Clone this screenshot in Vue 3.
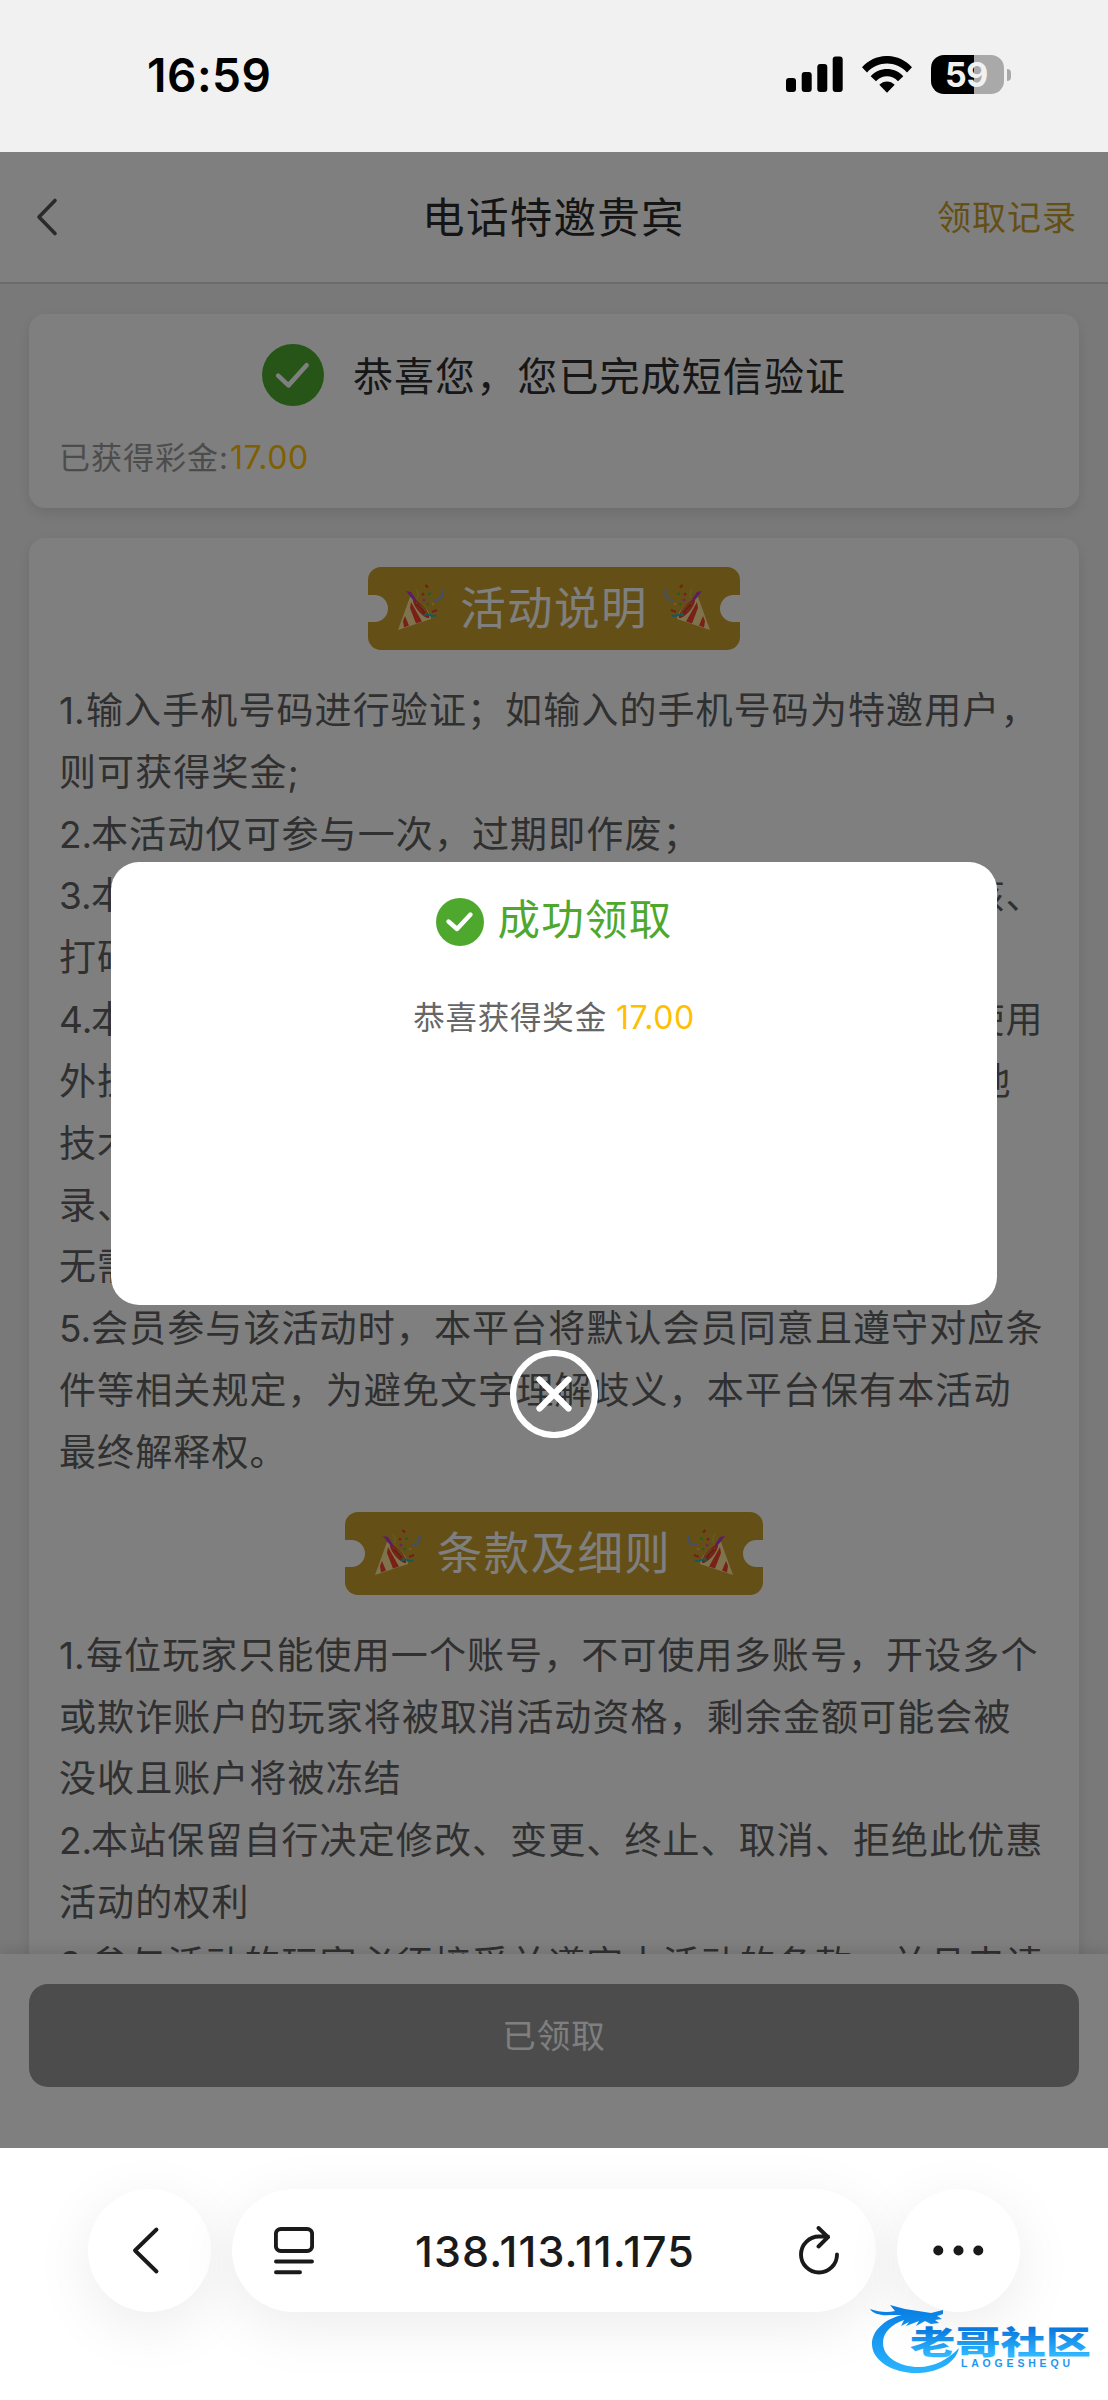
<script setup>
const rules = [
  '1.输入手机号码进行验证；如输入的手机号码为特邀用户，',
  '则可获得奖金;',
  '2.本活动仅可参与一次，过期即作废；',
  '3.本活动所赠送的奖金需满足一倍流水并通过本平台审核、',
  '打码完成后方可提现；',
  '4.本活动仅限账号本人正常人为操作，严禁租借账号及使用',
  '外挂、机器人、不同账号对赌、互刷套利、协议以及其他',
  '技术手段参与，否则平台有权禁止登',
  '录、取消或扣除奖励、冻结账号，',
  '无需特别通知；',
  '5.会员参与该活动时，本平台将默认会员同意且遵守对应条',
  '件等相关规定，为避免文字理解歧义，本平台保有本活动',
  '最终解释权。',
]
const terms = [
  '1.每位玩家只能使用一个账号，不可使用多账号，开设多个',
  '或欺诈账户的玩家将被取消活动资格，剩余金额可能会被',
  '没收且账户将被冻结',
  '2.本站保留自行决定修改、变更、终止、取消、拒绝此优惠',
  '活动的权利',
  '3.参与活动的玩家必须接受并遵守本活动的条款，并且申请',
]
const sections = [
  { title: '活动说明', lines: rules, width: 372 },
  { title: '条款及细则', lines: terms, width: 418 },
]
const split = (line) => {
  const m = line.match(/^(\d\.)(.*)$/)
  return m ? { no: m[1], text: m[2] } : { no: '', text: line }
}
</script>

<template>
  <div class="phone">
    <header class="status">
      <span class="time">16:59</span>
      <div class="indicators">
        <svg class="signal" width="57" height="37" viewBox="0 0 57 37">
          <rect x="0" y="22" width="10" height="14" rx="3" />
          <rect x="15.7" y="16" width="10" height="20" rx="3" />
          <rect x="31.3" y="8" width="10" height="28" rx="3" />
          <rect x="46.7" y="0.5" width="10" height="35.5" rx="3" />
        </svg>
        <svg class="wifi" width="50" height="37" viewBox="0 0 50 37">
          <path d="M0 11.3C13.5-3.8 36.5-3.8 50 11.3L45 16.4C34 4.6 16 4.6 5 16.4Z" />
          <path d="M8.7 20.2C17.5 10.5 32.5 10.5 41.3 20.2L36 25.3C30 18.7 20 18.7 14 25.3Z" />
          <path d="M17.3 28.8C21.6 24.3 28.4 24.3 32.7 28.8L25 36.8Z" />
        </svg>
        <div class="battery"><span>59</span></div>
        <i class="nub"></i>
      </div>
    </header>

    <main class="web">
      <nav class="nav">
        <svg width="24" height="40" viewBox="0 0 24 40"><path d="M20 3.5L4 20L20 36.5" fill="none" stroke="#555" stroke-width="3.6" stroke-linecap="round" stroke-linejoin="round" /></svg>
        <h1>电话特邀贵宾</h1>
        <a>领取记录</a>
      </nav>

      <section class="card verified">
        <div class="verified-title">
          <svg width="62" height="62" viewBox="0 0 48 48"><circle cx="24" cy="24" r="24" fill="#4ea82e" /><path d="M12.5 24.5L20.5 32L34.5 16.5" fill="none" stroke="#fff" stroke-width="3.6" stroke-linecap="round" stroke-linejoin="round" /></svg>
          <span>恭喜您，您已完成短信验证</span>
        </div>
        <p class="bonus">已获得彩金:<b>17.00</b></p>
      </section>

      <section class="card article">
        <template v-for="s in sections" :key="s.title">
          <div class="ticket" :style="{ width: s.width + 'px' }">
            <i class="notch"></i>
            <svg v-for="side in ['left', 'right']" :key="side" class="popper" :class="side" viewBox="0 0 48 48">
              <path d="M1 47L13 14C19 14 34 28 34 36Z" fill="#ffe79a" />
              <path d="M7 44.5L6 38L8 33L12 42.5ZM19 40.5L13 25L14 19L25 38.5Z" fill="#f3422f" />
              <path d="M16 16C23 17 33 29 32 35C27 36 15 23 16 16Z" fill="#e9402d" />
              <path d="M19 19C25 21 31 28 30 32C26 31 19 24 19 19Z" fill="#c08a2e" />
              <path d="M20 21L28 30" stroke="#d8342a" stroke-width="2" />
              <path d="M16 17L9 8L14 9L20 18Z" fill="#b43ad0" />
              <path d="M20 15C23 12 20 9 19 6" fill="none" stroke="#c9b53c" stroke-width="1.8" />
              <path d="M37 17C43 18 47 13 45 7" fill="none" stroke="#7fa0dd" stroke-width="2.2" />
              <path d="M27 33C32 28 35 36 39 32" fill="none" stroke="#2bb2c0" stroke-width="2" />
              <path d="M28.5 2L31 4.5M25 10.5L27 12M35 29L40 27" stroke="#e83f32" stroke-width="2.4" />
              <path d="M31 11L34 10.5M30 20L31.5 22" stroke="#5db43d" stroke-width="2.4" />
              <circle cx="27" cy="17" r="1.5" fill="#d94cc0" />
              <circle cx="36" cy="21" r="1.3" fill="#f0b93a" />
            </svg>
            <h2>{{ s.title }}</h2>
            <i class="notch end"></i>
          </div>
          <div class="copy">
            <p v-for="(line, i) in s.lines" :key="i">
              <span v-if="split(line).no" class="no" :class="{ one: split(line).no === '1.' }">{{ split(line).no }}</span>{{ split(line).text }}
            </p>
          </div>
        </template>
      </section>

      <footer class="claim"><button>已领取</button></footer>

      <div class="mask">
        <div class="dialog">
          <div class="dialog-title">
            <svg width="48" height="48" viewBox="0 0 48 48"><circle cx="24" cy="24" r="24" fill="#4ea82e" /><path d="M12.5 23.5L21 31L34.5 16.5" fill="none" stroke="#fff" stroke-width="4.4" stroke-linecap="round" stroke-linejoin="round" /></svg>
            <span>成功领取</span>
          </div>
          <p>恭喜获得奖金<b>17.00</b></p>
        </div>
        <svg class="close" width="88" height="88" viewBox="0 0 88 88"><circle cx="44" cy="44" r="41" /><path d="M29.5 29.5L58.5 58.5M58.5 29.5L29.5 58.5" /></svg>
      </div>
    </main>

    <div class="browser">
      <div class="round"><svg width="123" height="123" viewBox="0 0 123 123"><path d="M68.5 40.5L47 61.5L68.5 82.5" /></svg></div>
      <div class="address">
        <svg width="40" height="48" viewBox="0 0 40 48"><rect x="1.9" y="2" width="36.2" height="22" rx="5" /><path d="M2 34.5H38M2 45.3H26" /></svg>
        <span>138.113.11.175</span>
        <svg width="42" height="50" viewBox="0 0 42 50"><path d="M39 28.5A18 18 0 1 1 21 10.5H30M20.5 2L30 11.2L20.5 20.5" /></svg>
      </div>
      <div class="round"><svg class="dots" width="123" height="123" viewBox="0 0 123 123"><circle cx="41.3" cy="61.5" r="5" /><circle cx="61.5" cy="61.5" r="5" /><circle cx="81.3" cy="61.5" r="5" /></svg></div>
    </div>

    <svg class="brand" width="238" height="80" viewBox="0 0 238 80">
      <defs>
        <linearGradient id="blue" gradientUnits="userSpaceOnUse" x1="0" y1="8" x2="0" y2="72">
          <stop offset="0" stop-color="#087fe4" /><stop offset="1" stop-color="#2bb5ff" />
        </linearGradient>
        <linearGradient id="word" gradientUnits="userSpaceOnUse" x1="0" y1="-30" x2="0" y2="2">
          <stop offset="0" stop-color="#0877df" /><stop offset="1" stop-color="#2fb8ff" />
        </linearGradient>
      </defs>
      <path fill="url(#blue)" d="M32 14C14 18 1 31 2 44C3 61 25 73 49 72C70 71 86 61 89 47C79 58 64 66 49 66C29 66 13 56 13 42C13 31 22 23 34 19L31 25L39 21L36 25L49 20L46 25L55 20L61 23L69 22L65 19L72 18L67 15L73 13V9L61 12L48 10L35 8L20 4L25 10C17 12 9 11 0 8C3 13 12 15 20 14Z" />
      <text class="word" x="40" y="0" textLength="181" lengthAdjust="spacingAndGlyphs" transform="translate(0 52.5) scale(1 .84)">老哥社区</text>
      <text class="latin" x="91" y="66" textLength="109">LAOGESHEQU</text>
    </svg>
  </div>
</template>

<style>
body { margin: 0; }
</style>

<style scoped>
.phone {
  position: relative;
  display: flex;
  flex-direction: column;
  width: 1108px;
  height: 2400px;
  overflow: hidden;
  background: #fff;
  font-family: "Inter", "Noto Sans CJK SC", sans-serif;
}
h1, h2, p { margin: 0; font-weight: 400; }
b { font-weight: 400; color: #ffbf00; }
svg { display: block; flex: none; }

.status {
  flex: none;
  display: flex;
  align-items: flex-start;
  justify-content: space-between;
  box-sizing: border-box;
  height: 152px;
  padding: 0 97px 0 147px;
  background: #f1f1f1;
  color: #000;
}
.time { margin-top: 47px; font-size: 46px; line-height: 56px; font-weight: 600; letter-spacing: 0.5px; }
.indicators { display: flex; align-items: center; margin-top: 55px; height: 39px; }
.wifi { margin-left: 19px; }
.battery {
  width: 73px;
  height: 39px;
  margin-left: 19px;
  border-radius: 13px;
  background: linear-gradient(90deg, #000 43px, #a9a9a9 43px);
  color: #f1f1f1;
  text-align: center;
  font-size: 34px;
  line-height: 39px;
  font-weight: 700;
  text-indent: -2px;
  letter-spacing: -0.5px;
}
.nub { width: 4px; height: 12px; margin-left: 3px; border-radius: 0 5px 5px 0; background: #a9a9a9; }

.web {
  position: relative;
  flex: none;
  height: 1996px;
  overflow: hidden;
  background: #f3f3f3;
}
.nav {
  display: flex;
  align-items: center;
  justify-content: space-between;
  box-sizing: border-box;
  height: 132px;
  padding: 0 31px 0 35px;
  border-bottom: 2px solid #d6d6d6;
  background: #fff;
}
.nav h1 { margin: 0 0 5px 111px; font-size: 42.5px; letter-spacing: 1.3px; color: #2a2a2a; white-space: nowrap; }
.nav a { margin-bottom: 3px; color: #c99f2b; font-size: 34px; letter-spacing: 1px; }
.nav svg { width: 24px; }

.card {
  margin: 0 29px;
  border-radius: 16px;
  background: #fff;
  box-shadow: 0 5px 14px rgba(0, 0, 0, 0.1);
}
.verified { box-sizing: border-box; height: 194px; margin-top: 30px; padding: 30px; }
.verified-title {
  display: flex;
  align-items: center;
  justify-content: center;
  gap: 29px;
  height: 62px;
  font-size: 40px;
  letter-spacing: 1.1px;
  color: #2e2e2e;
  white-space: nowrap;
}
.verified-title span { margin-bottom: 3px; }
.bonus { margin-top: 30px; font-size: 31px; line-height: 44px; letter-spacing: 1px; color: #999; }
.bonus b { margin-left: 1px; font-size: 32px; letter-spacing: 0.6px; }

.article { margin-top: 30px; padding: 29px 30px; height: 1500px; }
.ticket {
  position: relative;
  display: flex;
  align-items: center;
  justify-content: space-between;
  height: 83px;
  margin: 0 auto 30px;
  border-radius: 13px;
  background: #c99f2c;
}
.ticket h2 { font-size: 45.5px; line-height: 83px; letter-spacing: 1.4px; color: #fff; white-space: nowrap; }
.notch { width: 20px; height: 27px; border-radius: 0 14px 14px 0; background: #fff; }
.notch.end { border-radius: 14px 0 0 14px; }
.popper { position: absolute; top: 16px; width: 48px; height: 48px; }
.popper.left { left: 29px; }
.popper.right { right: 29px; transform: scaleX(-1); }
.copy { margin-bottom: 28px; font-size: 37px; line-height: 61.83px; letter-spacing: 1.1px; color: #606060; }
.copy p { height: 61.83px; white-space: nowrap; }
.no { display: inline-block; width: 32px; letter-spacing: 0; }
.no.one { width: 27px; }

.claim {
  position: absolute;
  inset: auto 0 0;
  box-sizing: border-box;
  height: 194px;
  padding: 30px 29px;
  background: #fff;
  box-shadow: 0 -3px 14px rgba(0, 0, 0, 0.12);
}
.claim button {
  display: block;
  width: 100%;
  height: 103px;
  border: 0;
  border-radius: 19px;
  background: #999;
  color: #fff;
  font: 33.5px/103px "Inter", "Noto Sans CJK SC", sans-serif;
  letter-spacing: 1px;
}

.mask {
  position: absolute;
  inset: 0;
  display: flex;
  flex-direction: column;
  align-items: center;
  box-sizing: border-box;
  padding-top: 710px;
  background: rgba(0, 0, 0, 0.5);
}
.dialog {
  box-sizing: border-box;
  width: 886px;
  height: 443px;
  padding-top: 33px;
  border-radius: 28px;
  background: #fff;
  text-align: center;
}
.dialog-title {
  display: flex;
  align-items: center;
  justify-content: center;
  gap: 14px;
  height: 56px;
  font-size: 42.5px;
  line-height: 56px;
  letter-spacing: 1.2px;
  color: #4ea82e;
}
.dialog-title span { margin-bottom: 7px; }
.dialog-title svg { margin-bottom: 2px; }
.dialog p { margin-top: 44px; font-size: 31.5px; line-height: 46px; letter-spacing: 0.8px; color: #666; }
.dialog b { margin-left: 9px; font-size: 32px; letter-spacing: 0.6px; }
.close { margin-top: 45px; fill: none; stroke: #fff; stroke-width: 6.2; stroke-linecap: round; }

.browser {
  position: relative;
  flex: 1;
  display: flex;
  align-items: flex-start;
  justify-content: center;
  gap: 21px;
  padding-top: 41px;
  background: #fff;
}
.browser svg { fill: none; stroke: #1a1a1a; stroke-width: 3.9; stroke-linecap: round; stroke-linejoin: round; }
.browser .dots { fill: #1a1a1a; stroke: none; }
.round, .address { height: 123px; border-radius: 62px; background: #fff; box-shadow: 0 14px 60px rgba(0, 0, 0, 0.08); }
.round { width: 123px; }
.address {
  display: flex;
  align-items: center;
  justify-content: space-between;
  box-sizing: border-box;
  width: 644px;
  padding: 0 36px 0 42px;
  color: #1a1a1a;
  font-size: 43px;
  font-weight: 500;
}
.address span { margin-right: 2px; letter-spacing: 1.1px; }
.brand { position: absolute; left: 870px; top: 2301px; }
.word { fill: url(#word); font-family: "Noto Sans CJK SC", sans-serif; font-size: 38px; font-weight: 900; }
.latin { fill: #1f97ee; font-family: "Liberation Sans", sans-serif; font-size: 10.5px; font-weight: 700; }
</style>
